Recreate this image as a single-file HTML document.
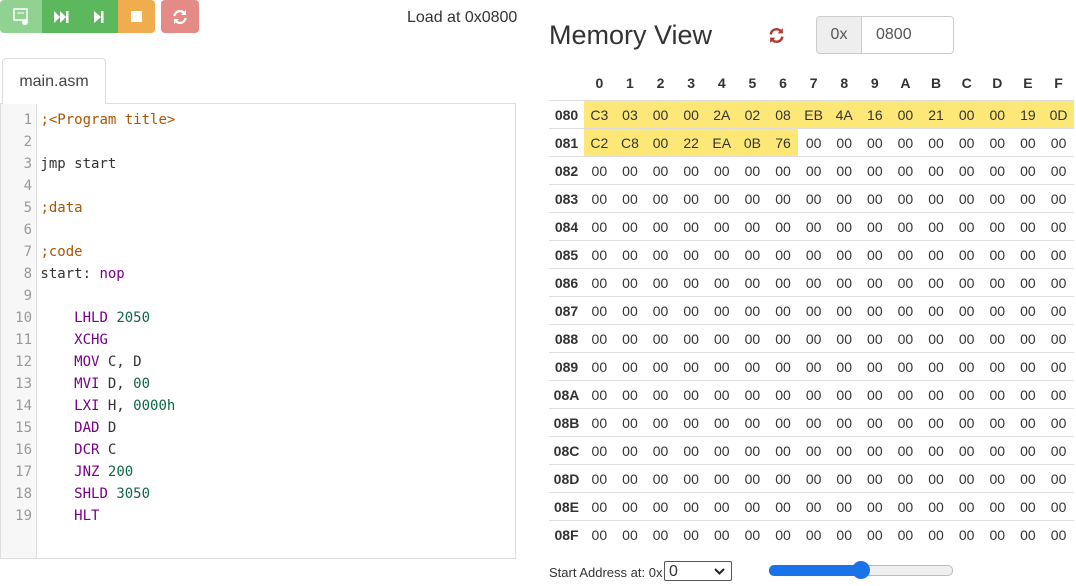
<!DOCTYPE html>
<html><head><meta charset="utf-8"><style>
body{margin:0;width:1076px;height:586px;background:#fff;font-family:"Liberation Sans",Arial,sans-serif;color:#333;position:relative;overflow:hidden}
.btn{position:absolute;top:0;height:33px;display:flex;align-items:center;justify-content:center}
.tab{position:absolute;left:2px;top:58px;width:102px;height:45px;border:1px solid #ddd;border-bottom:none;border-radius:4px 4px 0 0;background:#fff;font-size:16px;line-height:45px;text-align:center;color:#444;z-index:2}
.ed{position:absolute;left:0;top:103px;width:514px;height:454px;border:1px solid #ddd;}
.gut{position:absolute;left:0;top:0;width:35px;height:100%;background:#f7f7f7;border-right:1px solid #ddd}
.code{position:absolute;top:5px;left:0;font-family:"DejaVu Sans Mono",monospace;font-size:14px;line-height:22px;white-space:pre}
.ln{width:31px;text-align:right;color:#999;display:inline-block}
.c{color:#a50}.k{color:#708}.n{color:#164}
table{position:absolute;left:549px;top:65px;border-collapse:collapse;font-size:14px;table-layout:fixed;width:525px}
th{height:35px;font-weight:bold;text-align:center;padding:0;color:#333}
td{height:27px;border-top:1px solid #ddd;text-align:center;padding:0;color:#333}
td.h{font-weight:bold}
.y{background:#fde877}
</style></head><body>
<div class="btn" style="left:0;width:42px;background:#91d191;border-radius:4px 0 0 4px"><svg width="16" height="18"><rect x="1" y="1" width="13" height="11" fill="none" stroke="#fff" stroke-width="1.5"/><line x1="4" y1="5" x2="11" y2="5" stroke="#fff"/><circle cx="12" cy="14" r="3" fill="#fff"/></svg></div>
<div class="btn" style="left:42px;width:38px;background:#5cb85c;border-right:1px solid #4cae4c"><svg width="16" height="14"><path d="M1 1L7 7L1 13ZM7 1L13 7L7 13Z" fill="#fff"/><rect x="13" y="1" width="2.5" height="12" fill="#fff"/></svg></div>
<div class="btn" style="left:80px;width:38px;background:#5cb85c"><svg width="12" height="14"><path d="M1 1L8 7L1 13Z" fill="#fff"/><rect x="8" y="1" width="2.5" height="12" fill="#fff"/></svg></div>
<div class="btn" style="left:118px;width:37px;background:#f0ad4e;border-radius:0 4px 4px 0"><div style="width:11px;height:11px;background:#fff"></div></div>
<div class="btn" style="left:161px;width:38px;background:#e48b87;border-radius:4px"><svg width="16" height="16" viewBox="0 0 16 16"><path d="M2.5 7A5.5 5.5 0 0 1 12.5 4.5M13.5 9A5.5 5.5 0 0 1 3.5 11.5" fill="none" stroke="#fff" stroke-width="2.3"/><path d="M14 1V6H9Z M2 15V10H7Z" fill="#fff"/></svg></div>
<div style="position:absolute;left:407px;top:9px;font-size:16px;color:#333">Load at 0x0800</div>
<div class="tab">main.asm</div>
<div class="ed"><div class="gut"></div><div class="code"><span class="ln">1</span> <span class="c">;&lt;Program title&gt;</span>
<span class="ln">2</span> 
<span class="ln">3</span> jmp start
<span class="ln">4</span> 
<span class="ln">5</span> <span class="c">;data</span>
<span class="ln">6</span> 
<span class="ln">7</span> <span class="c">;code</span>
<span class="ln">8</span> start: <span class="k">nop</span>
<span class="ln">9</span> 
<span class="ln">10</span>     <span class="k">LHLD</span> <span class="n">2050</span>
<span class="ln">11</span>     <span class="k">XCHG</span>
<span class="ln">12</span>     <span class="k">MOV</span> C, D
<span class="ln">13</span>     <span class="k">MVI</span> D, <span class="n">00</span>
<span class="ln">14</span>     <span class="k">LXI</span> H, <span class="n">0000h</span>
<span class="ln">15</span>     <span class="k">DAD</span> D
<span class="ln">16</span>     <span class="k">DCR</span> C
<span class="ln">17</span>     <span class="k">JNZ</span> <span class="n">200</span>
<span class="ln">18</span>     <span class="k">SHLD</span> <span class="n">3050</span>
<span class="ln">19</span>     <span class="k">HLT</span></div></div>
<div style="position:absolute;left:549px;top:20px;font-size:27px;color:#333">Memory View</div>
<svg style="position:absolute;left:768px;top:27px" width="17" height="17" viewBox="0 0 16 16"><path d="M2.5 7A5.5 5.5 0 0 1 12.5 4.5M13.5 9A5.5 5.5 0 0 1 3.5 11.5" fill="none" stroke="#b03a30" stroke-width="2.3"/><path d="M14 1V6H9Z M2 15V10H7Z" fill="#b03a30"/></svg>
<div style="position:absolute;left:816px;top:16px;width:136px;height:36px;border:1px solid #ccc;border-radius:4px;font-size:16px;overflow:hidden">
<div style="position:absolute;left:0;top:0;width:44px;height:36px;background:#eee;border-right:1px solid #ccc;text-align:center;line-height:36px;color:#555">0x</div>
<div style="position:absolute;left:59px;top:0;line-height:36px;color:#555">0800</div></div>
<table>
<colgroup><col style="width:35px"><col span="16" style="width:30.6px"></colgroup>
<tr><th></th><th>0</th><th>1</th><th>2</th><th>3</th><th>4</th><th>5</th><th>6</th><th>7</th><th>8</th><th>9</th><th>A</th><th>B</th><th>C</th><th>D</th><th>E</th><th>F</th></tr>
<tr><td class="h">080</td><td class="y">C3</td><td class="y">03</td><td class="y">00</td><td class="y">00</td><td class="y">2A</td><td class="y">02</td><td class="y">08</td><td class="y">EB</td><td class="y">4A</td><td class="y">16</td><td class="y">00</td><td class="y">21</td><td class="y">00</td><td class="y">00</td><td class="y">19</td><td class="y">0D</td></tr>
<tr><td class="h">081</td><td class="y">C2</td><td class="y">C8</td><td class="y">00</td><td class="y">22</td><td class="y">EA</td><td class="y">0B</td><td class="y">76</td><td>00</td><td>00</td><td>00</td><td>00</td><td>00</td><td>00</td><td>00</td><td>00</td><td>00</td></tr>
<tr><td class="h">082</td><td>00</td><td>00</td><td>00</td><td>00</td><td>00</td><td>00</td><td>00</td><td>00</td><td>00</td><td>00</td><td>00</td><td>00</td><td>00</td><td>00</td><td>00</td><td>00</td></tr>
<tr><td class="h">083</td><td>00</td><td>00</td><td>00</td><td>00</td><td>00</td><td>00</td><td>00</td><td>00</td><td>00</td><td>00</td><td>00</td><td>00</td><td>00</td><td>00</td><td>00</td><td>00</td></tr>
<tr><td class="h">084</td><td>00</td><td>00</td><td>00</td><td>00</td><td>00</td><td>00</td><td>00</td><td>00</td><td>00</td><td>00</td><td>00</td><td>00</td><td>00</td><td>00</td><td>00</td><td>00</td></tr>
<tr><td class="h">085</td><td>00</td><td>00</td><td>00</td><td>00</td><td>00</td><td>00</td><td>00</td><td>00</td><td>00</td><td>00</td><td>00</td><td>00</td><td>00</td><td>00</td><td>00</td><td>00</td></tr>
<tr><td class="h">086</td><td>00</td><td>00</td><td>00</td><td>00</td><td>00</td><td>00</td><td>00</td><td>00</td><td>00</td><td>00</td><td>00</td><td>00</td><td>00</td><td>00</td><td>00</td><td>00</td></tr>
<tr><td class="h">087</td><td>00</td><td>00</td><td>00</td><td>00</td><td>00</td><td>00</td><td>00</td><td>00</td><td>00</td><td>00</td><td>00</td><td>00</td><td>00</td><td>00</td><td>00</td><td>00</td></tr>
<tr><td class="h">088</td><td>00</td><td>00</td><td>00</td><td>00</td><td>00</td><td>00</td><td>00</td><td>00</td><td>00</td><td>00</td><td>00</td><td>00</td><td>00</td><td>00</td><td>00</td><td>00</td></tr>
<tr><td class="h">089</td><td>00</td><td>00</td><td>00</td><td>00</td><td>00</td><td>00</td><td>00</td><td>00</td><td>00</td><td>00</td><td>00</td><td>00</td><td>00</td><td>00</td><td>00</td><td>00</td></tr>
<tr><td class="h">08A</td><td>00</td><td>00</td><td>00</td><td>00</td><td>00</td><td>00</td><td>00</td><td>00</td><td>00</td><td>00</td><td>00</td><td>00</td><td>00</td><td>00</td><td>00</td><td>00</td></tr>
<tr><td class="h">08B</td><td>00</td><td>00</td><td>00</td><td>00</td><td>00</td><td>00</td><td>00</td><td>00</td><td>00</td><td>00</td><td>00</td><td>00</td><td>00</td><td>00</td><td>00</td><td>00</td></tr>
<tr><td class="h">08C</td><td>00</td><td>00</td><td>00</td><td>00</td><td>00</td><td>00</td><td>00</td><td>00</td><td>00</td><td>00</td><td>00</td><td>00</td><td>00</td><td>00</td><td>00</td><td>00</td></tr>
<tr><td class="h">08D</td><td>00</td><td>00</td><td>00</td><td>00</td><td>00</td><td>00</td><td>00</td><td>00</td><td>00</td><td>00</td><td>00</td><td>00</td><td>00</td><td>00</td><td>00</td><td>00</td></tr>
<tr><td class="h">08E</td><td>00</td><td>00</td><td>00</td><td>00</td><td>00</td><td>00</td><td>00</td><td>00</td><td>00</td><td>00</td><td>00</td><td>00</td><td>00</td><td>00</td><td>00</td><td>00</td></tr>
<tr><td class="h">08F</td><td>00</td><td>00</td><td>00</td><td>00</td><td>00</td><td>00</td><td>00</td><td>00</td><td>00</td><td>00</td><td>00</td><td>00</td><td>00</td><td>00</td><td>00</td><td>00</td></tr>
</table>
<div style="position:absolute;left:549px;top:565px;font-size:13px;color:#333">Start Address at: 0x</div>
<div style="position:absolute;left:664px;top:561px;height:20px;border:1px solid #555;border-radius:2px;font-size:16px;line-height:19px;padding-left:4px;box-sizing:border-box;width:68px">0<svg style="position:absolute;right:6px;top:6px" width="11" height="7"><path d="M1 1L5.5 5.5L10 1" fill="none" stroke="#222" stroke-width="2"/></svg></div>
<div style="position:absolute;left:769px;top:565px;width:182px;height:9px;border:1px solid #bbb;border-radius:5px;background:#efefef"></div>
<div style="position:absolute;left:769px;top:565px;width:92px;height:11px;border-radius:5px;background:#1a73e8"></div>
<div style="position:absolute;left:852px;top:561px;width:18px;height:18px;border-radius:50%;background:#1a73e8"></div>
</body></html>
